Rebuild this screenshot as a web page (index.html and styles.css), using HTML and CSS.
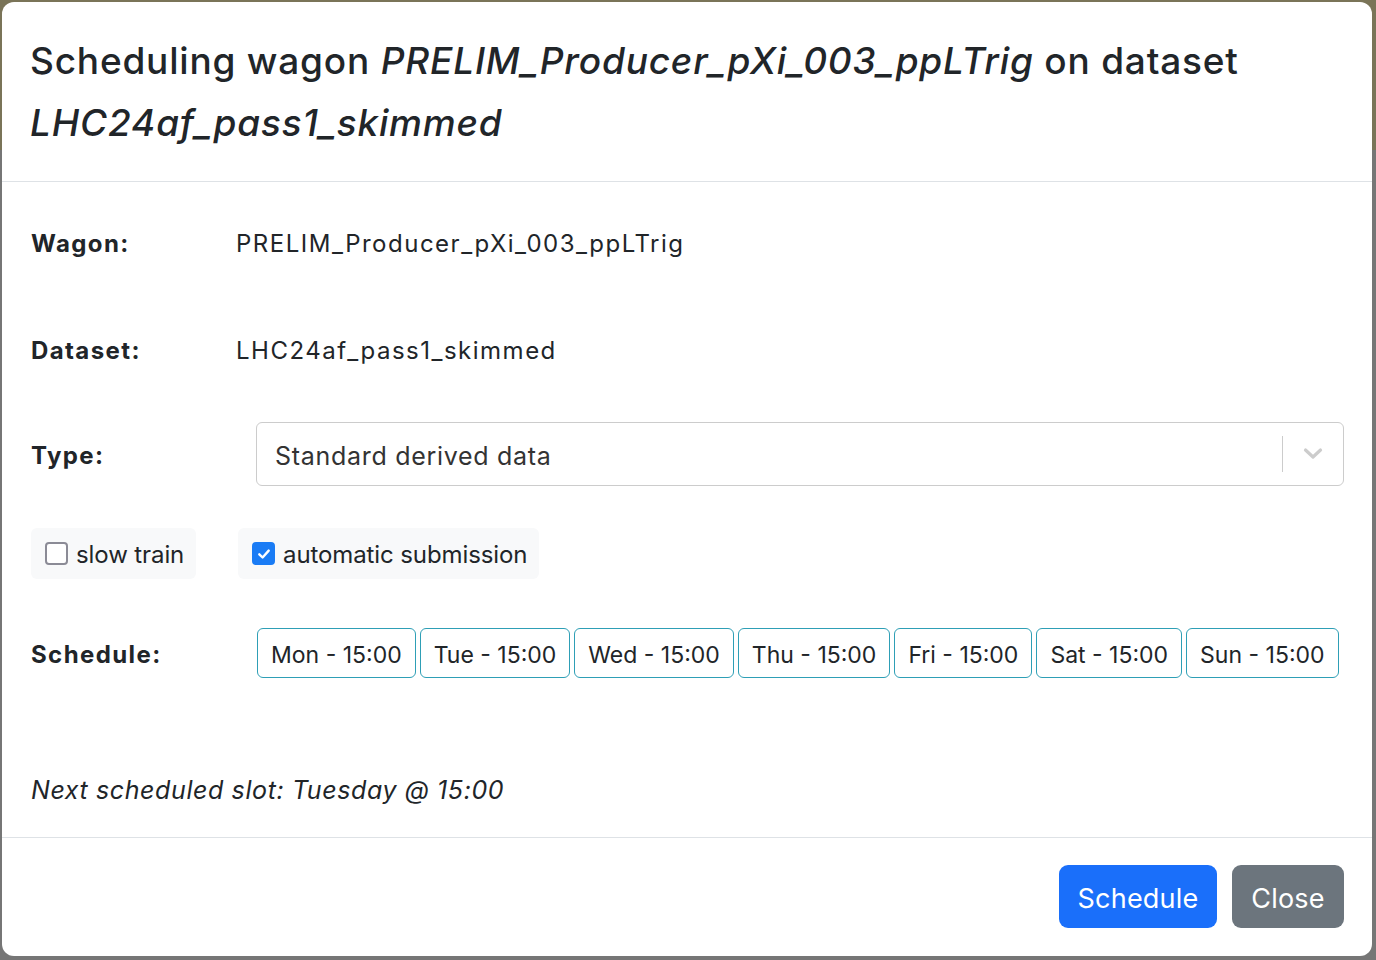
FILE: index.html
```html
<!DOCTYPE html>
<html lang="en">
<head>
<meta charset="utf-8">
<title>Schedule wagon</title>
<link rel="stylesheet" href="styles.css">
</head>
<body>
<div class="backdrop">
  <div class="modal">
    <div class="modal-header">
      <h4 class="modal-title">Scheduling wagon <em>PRELIM_Producer_pXi_003_ppLTrig</em> on dataset <em>LHC24af_pass1_skimmed</em></h4>
    </div>
    <div class="modal-body">
      <div class="row row-wagon">
        <div class="label">Wagon:</div>
        <div class="value">PRELIM_Producer_pXi_003_ppLTrig</div>
      </div>
      <div class="row row-dataset">
        <div class="label">Dataset:</div>
        <div class="value">LHC24af_pass1_skimmed</div>
      </div>
      <div class="row row-type">
        <div class="label label-type">Type:</div>
        <div class="select">
          <span class="select-value">Standard derived data</span>
          <span class="select-sep"></span>
          <svg class="select-chevron" width="20" height="20" viewBox="0 0 20 20"><path d="M2.5 6 L10 13 L17.5 6" fill="none" stroke="#cccccc" stroke-width="3.2" stroke-linecap="round" stroke-linejoin="round"/></svg>
        </div>
      </div>
      <div class="row row-checks">
        <label class="check-pill check-slow">
          <span class="checkbox"></span>
          <span class="check-text">slow train</span>
        </label>
        <label class="check-pill check-auto">
          <span class="checkbox checked"><svg width="16" height="16" viewBox="0 0 16 16"><path d="M3.3 8.3 L6.6 11.5 L12.7 4.6" fill="none" stroke="#fff" stroke-width="2.4" stroke-linecap="round" stroke-linejoin="round"/></svg></span>
          <span class="check-text">automatic submission</span>
        </label>
      </div>
      <div class="row row-schedule">
        <div class="label label-schedule">Schedule:</div>
        <div class="slots">
          <button class="slot">Mon - 15:00</button>
          <button class="slot">Tue - 15:00</button>
          <button class="slot">Wed - 15:00</button>
          <button class="slot">Thu - 15:00</button>
          <button class="slot">Fri - 15:00</button>
          <button class="slot">Sat - 15:00</button>
          <button class="slot">Sun - 15:00</button>
        </div>
      </div>
      <p class="next-slot">Next scheduled slot: Tuesday @ 15:00</p>
    </div>
    <div class="modal-footer">
      <button class="btn btn-primary">Schedule</button>
      <button class="btn btn-secondary">Close</button>
    </div>
  </div>
</div>
</body>
</html>
```

FILE: styles.css
```css
* { box-sizing: border-box; }

html, body {
  margin: 0;
  padding: 0;
  height: 100%;
}

body {
  font-family: Inter, "Noto Sans", "Liberation Sans", sans-serif;
  color: #212529;
  letter-spacing: 0.6px;
  background: linear-gradient(to bottom, #7a7458 0, #7a7458 150px, #767676 150px, #767676 100%);
}

.backdrop {
  padding: 2px 4px 4px 2px;
  height: 100%;
}

.modal {
  background: #fff;
  border-radius: 12px;
  height: 954px;
  display: flex;
  flex-direction: column;
}

.modal-header {
  padding: 28px 28px 24px 28px;
  border-bottom: 1px solid #dee2e6;
  height: 180px;
}

.modal-title {
  margin: 0;
  font-size: 37px;
  font-weight: 500;
  line-height: 62px;
  letter-spacing: 0.8px;
}

.modal-title em {
  font-style: italic;
}

.modal-body {
  flex: 1;
  padding: 29px 28px 0 29px;
  display: flex;
  flex-direction: column;
}

.row {
  display: flex;
  align-items: center;
}

.label {
  width: 205px;
  flex: none;
  font-weight: 700;
  font-size: 24px;
  letter-spacing: 1.4px;
}

.label-type,
.label-schedule {
  padding-top: 3px;
}

.value {
  font-size: 24px;
  letter-spacing: 1.5px;
  white-space: nowrap;
}

.row-wagon { height: 64px; }
.row-dataset { height: 64px; margin-top: 43px; }
.row-type { height: 64px; margin-top: 40px; }

.select {
  margin-left: 20px;
  flex: 1;
  height: 64px;
  border: 1px solid #cccccc;
  border-radius: 6px;
  display: flex;
  align-items: center;
  padding-left: 18px;
  padding-right: 20px;
}

.select-value {
  flex: 1;
  font-size: 25px;
  color: #333333;
  letter-spacing: 0.7px;
  padding-top: 3px;
}

.select-sep {
  width: 1px;
  height: 36px;
  background: #cccccc;
  margin-right: 20px;
}

.select-chevron {
  display: block;
}

.row-checks {
  margin-top: 42px;
  gap: 42px;
}

.check-pill {
  display: flex;
  align-items: center;
  height: 51px;
  background: #f8f9fa;
  border-radius: 6px;
  padding: 0 14px 0 14px;
  font-size: 24px;
  letter-spacing: -0.1px;
  gap: 8px;
  white-space: nowrap;
  flex: none;
}

.check-text {
  padding-top: 2px;
}

.check-slow { width: 165px; }
.check-auto { width: 301px; }

.checkbox {
  width: 23px;
  height: 23px;
  border: 2px solid #8b8b96;
  border-radius: 4px;
  background: #fff;
  display: flex;
  align-items: center;
  justify-content: center;
  flex: none;
}

.checkbox.checked {
  background: #1a7cf5;
  border-color: #1a7cf5;
}

.row-schedule {
  margin-top: 49px;
  height: 50px;
}

.slots {
  margin-left: 21px;
  display: flex;
  gap: 4px;
}

.slot {
  font-family: inherit;
  font-size: 23px;
  letter-spacing: 0;
  color: #212529;
  background: #fff;
  border: 1px solid #2e9fb6;
  border-radius: 6px;
  height: 50px;
  padding: 3px 13px 0 13px;
  white-space: nowrap;
  flex: none;
}

.next-slot {
  margin: 97px 0 0 0;
  font-size: 25px;
  font-style: italic;
  letter-spacing: 0.6px;
}

.modal-footer {
  border-top: 1px solid #dee2e6;
  height: 119px;
  padding: 27px 28px 0 0;
  display: flex;
  justify-content: flex-end;
  gap: 15px;
}

.btn {
  font-family: inherit;
  font-size: 27px;
  letter-spacing: 0.2px;
  color: #fff;
  border: none;
  border-radius: 9px;
  height: 63px;
  padding: 3px 0 0 0;
}

.btn-primary {
  background: #1a6ffa;
  width: 158px;
}

.btn-secondary {
  background: #6c757d;
  width: 112px;
}
```
